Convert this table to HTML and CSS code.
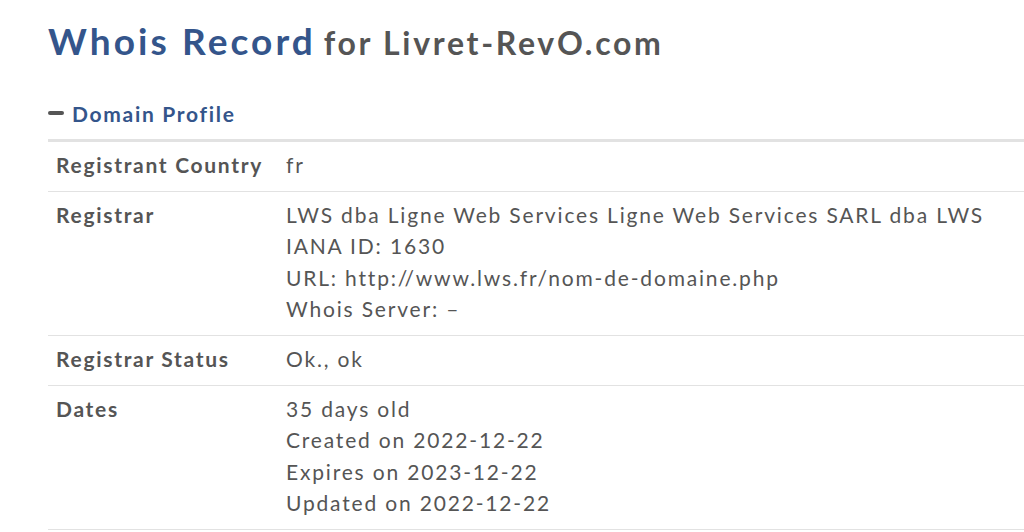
FILE: index.html
```html
<!DOCTYPE html>
<html>
<head>
<meta charset="utf-8">
<link rel="stylesheet" href="styles.css">
</head>
<body>
<div class="page">
  <h1 class="title"><span class="title-main">Whois Record</span> <span class="title-sub">for Livret-RevO.com</span></h1>
  <h2 class="section"><span class="minus"></span>Domain Profile</h2>
  <div class="table">
    <div class="row">
      <div class="label">Registrant Country</div>
      <div class="value">fr</div>
    </div>
    <div class="row">
      <div class="label">Registrar</div>
      <div class="value">LWS dba Ligne Web Services Ligne Web Services SARL dba LWS<br>IANA ID: 1630<br>URL: http://www.lws.fr/nom-de-domaine.php<br>Whois Server: –</div>
    </div>
    <div class="row">
      <div class="label">Registrar Status</div>
      <div class="value">Ok., ok</div>
    </div>
    <div class="row">
      <div class="label">Dates</div>
      <div class="value">35 days old<br>Created on 2022-12-22<br>Expires on 2023-12-22<br>Updated on 2022-12-22</div>
    </div>
  </div>
</div>
</body>
</html>
```
FILE: styles.css
```css
html, body {
  margin: 0;
  padding: 0;
  background: #ffffff;
}
body {
  font-family: Lato, "Open Sans", sans-serif;
  color: #555555;
}
.page {
  padding: 16px 0 0 48px;
}
.title {
  margin: 0;
  font-weight: 700;
  line-height: 50px;
  height: 50px;
  white-space: nowrap;
}
.title-main {
  font-size: 37px;
  letter-spacing: 3.1px;
  color: #34558b;
}
.title-sub {
  font-size: 32px;
  letter-spacing: 2.7px;
  color: #555555;
  font-weight: 700;
}
.section {
  margin: 33px 0 0 0;
  display: flex;
  align-items: center;
  font-size: 21px;
  font-weight: 700;
  letter-spacing: 1.7px;
  color: #34558b;
  line-height: 30px;
  height: 30px;
}
.minus {
  display: inline-block;
  width: 16px;
  height: 4px;
  border-radius: 2px;
  background: #555555;
  margin: 0 8px 3px 0;
}
.table {
  margin-top: 10px;
  border-top: 3px solid #e2e2e2;
}
.row {
  display: flex;
  border-bottom: 1px solid #e2e2e2;
  padding: 7px 0 10px 8px;
  font-size: 21px;
  line-height: 31.6px;
  letter-spacing: 1.7px;
}
.label {
  width: 230px;
  flex: none;
  font-weight: 700;
  color: #555555;
}
.value {
  font-weight: 400;
  letter-spacing: 1.82px;
  color: #555555;
}
```
